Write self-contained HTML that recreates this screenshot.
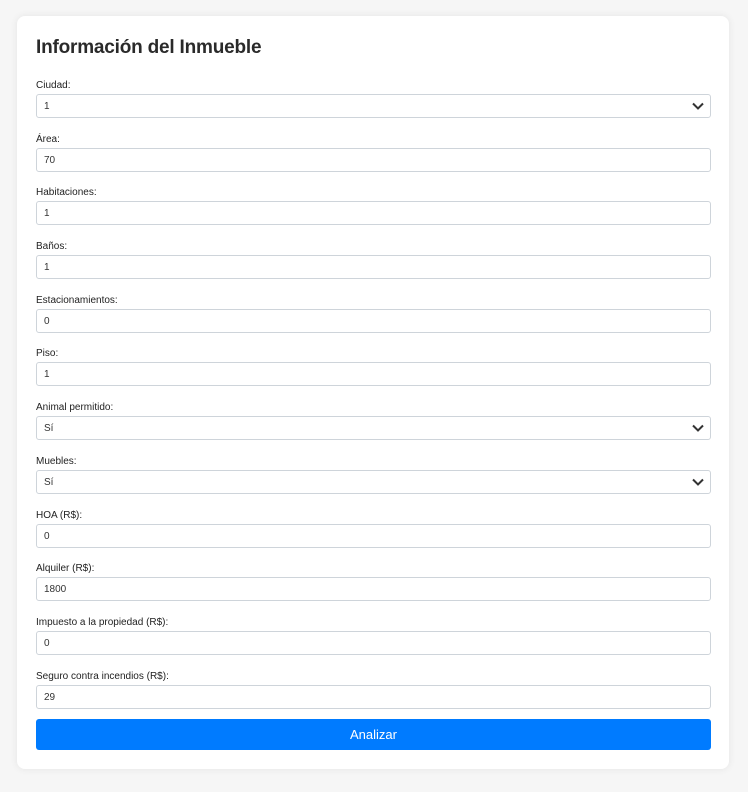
<!DOCTYPE html>
<html><head><meta charset="utf-8"><style>
*{box-sizing:border-box;margin:0;padding:0}
body{width:748px;height:792px;background:#f6f6f6;font-family:"Liberation Sans",sans-serif;color:#212529;overflow:hidden}
.card{position:absolute;left:17px;top:16px;width:712px;height:753px;background:#fff;border-radius:8px;box-shadow:0 0 8px rgba(0,0,0,.08);padding:19px 18px 19px 19px}
h2{font-size:19px;font-weight:bold;color:#2a2a2a;line-height:26px;height:42px;margin-left:0;letter-spacing:-0.2px}
label{display:block;font-size:10px;line-height:17px;height:17px;color:#222;position:relative;top:0}
.in{height:24px;border:1px solid #ced4da;border-radius:3px;font-size:10px;line-height:22px;padding:1px 0 0 7px;margin-bottom:12.7px;position:relative;color:#333}
.sel svg{position:absolute;right:6px;top:7px}
.btn{height:31px;background:#007bff;color:#fff;border-radius:3px;text-align:center;line-height:31px;font-size:13px}
</style></head><body>
<div class="card">
<h2>Información del Inmueble</h2>
<label>Ciudad:</label><div class="in sel">1<svg width="12" height="8" viewBox="0 0 12 8"><path d="M1 1.5l5 5 5-5" stroke="#333" stroke-width="2" fill="none"/></svg></div>
<label>Área:</label><div class="in">70</div>
<label>Habitaciones:</label><div class="in">1</div>
<label>Baños:</label><div class="in">1</div>
<label>Estacionamientos:</label><div class="in">0</div>
<label>Piso:</label><div class="in">1</div>
<label>Animal permitido:</label><div class="in sel">Sí<svg width="12" height="8" viewBox="0 0 12 8"><path d="M1 1.5l5 5 5-5" stroke="#333" stroke-width="2" fill="none"/></svg></div>
<label>Muebles:</label><div class="in sel">Sí<svg width="12" height="8" viewBox="0 0 12 8"><path d="M1 1.5l5 5 5-5" stroke="#333" stroke-width="2" fill="none"/></svg></div>
<label>HOA (R$):</label><div class="in">0</div>
<label>Alquiler (R$):</label><div class="in">1800</div>
<label>Impuesto a la propiedad (R$):</label><div class="in">0</div>
<label>Seguro contra incendios (R$):</label><div class="in" style="margin-bottom:10px">29</div>
<div class="btn">Analizar</div>
</div>
</body></html>
